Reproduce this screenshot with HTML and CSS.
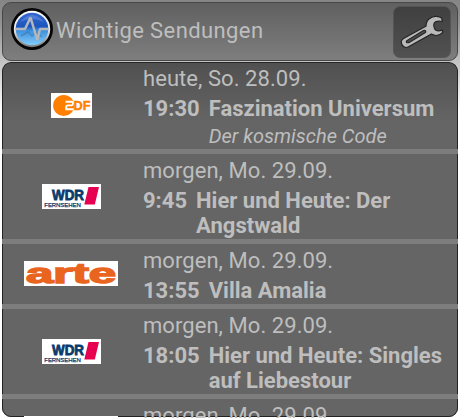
FILE: index.html
```html
<!DOCTYPE html>
<html lang="de">
<head>
<meta charset="utf-8">
<title>Wichtige Sendungen</title>
<link rel="stylesheet" href="styles.css">
</head>
<body>
<svg class="defs" aria-hidden="true">
  <defs>
    <symbol id="zdf" viewBox="0 0 41 25">
      <rect width="41" height="25" fill="#fff"/>
      <circle cx="12.7" cy="12.5" r="10.6" fill="#ff8000"/>
      <path d="M14.5 8.8H20.5Q22 8.8 22 10.5T20.5 12.4H17Q15.2 12.4 15.2 14.2V16.2H22.5" fill="none" stroke="#fff" stroke-width="1.9"/>
      <text x="22.5" y="16.8" font-size="12.5" textLength="17" lengthAdjust="spacingAndGlyphs" class="logo-text zdf-text">DF</text>
    </symbol>
    <symbol id="wdr" viewBox="0 0 59 25">
      <rect width="59" height="25" fill="#fff"/>
      <text x="10" y="16.2" font-size="13.8" textLength="32" lengthAdjust="spacingAndGlyphs" class="logo-text wdr-text">WDR</text>
      <text x="2.3" y="23" font-size="6" textLength="36.5" class="wdr-sub">FERNSEHEN</text>
      <path d="M46.5 3H57L52.8 20.5H42.3Z" fill="#e6004f"/>
    </symbol>
    <symbol id="arte" viewBox="0 0 94 25">
      <rect width="94" height="25" fill="#fff"/>
      <text x="2" y="22" font-size="27" textLength="90" lengthAdjust="spacingAndGlyphs" class="logo-text arte-text">arte</text>
    </symbol>
    <linearGradient id="blue" x1="0" y1="0" x2="0" y2="1">
      <stop offset="0" stop-color="#3467d0"/>
      <stop offset=".42" stop-color="#1c56bd"/>
      <stop offset=".55" stop-color="#3f90dc"/>
      <stop offset="1" stop-color="#82ccfa"/>
    </linearGradient>
    <linearGradient id="rim" x1="0" y1="0" x2="0" y2="1">
      <stop offset="0" stop-color="#fff"/>
      <stop offset=".55" stop-color="#e4e4e4"/>
      <stop offset="1" stop-color="#777"/>
    </linearGradient>
  </defs>
</svg>

<header class="bar">
  <svg class="app-icon" viewBox="0 0 42 42">
    <circle cx="21" cy="21" r="21" fill="#050505"/>
    <circle cx="21" cy="21" r="18.2" fill="url(#rim)"/>
    <circle cx="21" cy="21" r="16.3" fill="url(#blue)"/>
    <path d="M9 14Q21 0 33 14Q21 8 9 14Z" fill="#7195df" opacity=".5"/>
    <path d="M10 28l7-4 4 4 4-4 6 5" fill="none" stroke="#3678b6" stroke-width="1.5" opacity=".6"/>
    <path d="M4.5 21H14L19.5 9.5L26.3 32L29 21H37.5" fill="none" stroke="#b3b7bc" stroke-width="2.5" stroke-linejoin="bevel"/>
  </svg>
  <h1 class="title">Wichtige Sendungen</h1>
  <button class="settings" aria-label="Einstellungen">
    <svg class="wrench" viewBox="0 0 58 52">
      <path d="M48.7 17.9C45 15.3 39.5 16 36 19C33.7 21 33 23.5 33 26.2L10.5 38.5C7.5 40.2 8 43.4 9.4 45.4C11 47.6 13.2 48 15.5 46.8L38.5 34C42.5 36.4 47 35.2 49.7 32.3L49.4 30.2C46 31.2 42.5 30.8 41.5 28.5C40.4 26 40.6 23 43 21.6C45 20.8 47.3 21.3 49.3 21.3Z" transform="translate(0 -6)" fill="#bababa" stroke="#252525" stroke-width="1.2"/>
      <path d="M14.2 34.4L30.5 24.6C32.2 23.6 33.8 25.4 32 26.8L16.2 36.4C13.5 37.5 12.5 35.6 14.2 34.4Z" fill="#505050" stroke="#252525" stroke-width="1.2"/>
    </svg>
  </button>
</header>

<main class="list">
  <article class="row first">
    <div class="channel"><svg class="zdf"><use href="#zdf"/></svg></div>
    <div class="info">
      <div class="date">heute, So. 28.09.</div>
      <div class="show"><span class="time">19:30</span><div class="name">Faszination Universum<div class="sub">Der kosmische Code</div></div></div>
    </div>
  </article>
  <article class="row">
    <div class="channel"><svg class="wdr"><use href="#wdr"/></svg></div>
    <div class="info">
      <div class="date">morgen, Mo. 29.09.</div>
      <div class="show"><span class="time">9:45</span><div class="name">Hier und Heute: Der<br>Angstwald</div></div>
    </div>
  </article>
  <article class="row">
    <div class="channel"><svg class="arte"><use href="#arte"/></svg></div>
    <div class="info">
      <div class="date">morgen, Mo. 29.09.</div>
      <div class="show"><span class="time">13:55</span><div class="name">Villa Amalia</div></div>
    </div>
  </article>
  <article class="row">
    <div class="channel"><svg class="wdr"><use href="#wdr"/></svg></div>
    <div class="info">
      <div class="date">morgen, Mo. 29.09.</div>
      <div class="show"><span class="time">18:05</span><div class="name">Hier und Heute: Singles<br>auf Liebestour</div></div>
    </div>
  </article>
  <article class="row last">
    <div class="channel"><svg class="arte"><use href="#arte"/></svg></div>
    <div class="info">
      <div class="date">morgen, Mo. 29.09.</div>
    </div>
  </article>
</main>
</body>
</html>
```
FILE: styles.css
```css
* { box-sizing: border-box; }

body {
  margin: 0;
  width: 460px;
  height: 420px;
  overflow: hidden;
  padding: 2px 2px 0;
  background: linear-gradient(#858585 0, #909090 20px, #c4c4c4 62px, #fff 110px);
  font-family: Roboto, "Liberation Sans", sans-serif;
  font-size: 22px;
  line-height: 25px;
  color: #bebebe;
}

.defs { position: absolute; width: 0; height: 0; }

.bar {
  display: flex;
  height: 59px;
  border: 1px solid #484848;
  border-radius: 9px;
  background: linear-gradient(#606060, #7e7e7e);
  padding: 3px 6px 0 8px;
}

.app-icon { width: 42px; height: 42px; margin-top: 2px; flex: none; }

.title {
  margin: 12px 0 0 3px;
  font-size: 22px;
  font-weight: 400;
  letter-spacing: .4px;
  white-space: nowrap;
}

.settings {
  margin-left: auto;
  width: 58px;
  height: 52px;
  padding: 0;
  border: 1px solid #555;
  border-radius: 7px;
  background: linear-gradient(#404040, #515151);
}

.wrench { display: block; width: 58px; height: 52px; margin: -1px; }

.list {
  height: 356px;
  margin-top: 1px;
  overflow: hidden;
  border-radius: 9px 9px 0 0;
  background: linear-gradient(#505050, #656565 60px, #656565);
  position: relative;
}

.list::before {
  content: "";
  position: absolute;
  inset: 0 0 1px;
  border: 1px solid #242424;
  border-radius: 9px;
  box-shadow: 0 0 0 9px #fff;
}

.row {
  position: relative;
  display: flex;
  align-items: center;
  border-top: 5px solid #7d7d7d;
  padding-bottom: 1px;
}

.first { border-top: 0; padding-bottom: 0; }
.last { height: 65px; align-items: flex-start; }
.last .channel { padding-top: 17px; }

.channel { width: 139px; display: flex; justify-content: center; }
.channel svg { height: 25px; display: block; }
.zdf { width: 41px; }
.wdr { width: 59px; }
.arte { width: 94px; margin-right: 1px; }

.info { padding-top: 4px; margin-left: 2px; white-space: nowrap; }
.date { margin-bottom: 5px; letter-spacing: .06px; }
.show { display: flex; gap: 9px; font-weight: 700; }
.sub { margin-top: 3px; font-size: 20px; font-weight: 400; font-style: italic; }

.logo-text { font-family: "Liberation Sans", sans-serif; font-weight: 700; }
.zdf-text { fill: #ff8000; stroke: #ff8000; stroke-width: .4px; }
.wdr-text { fill: #0a3a6c; stroke: #0a3a6c; stroke-width: .8px; }
.wdr-sub { fill: #0a3a6c; stroke: #0a3a6c; stroke-width: .25px; font-family: "Liberation Sans", sans-serif; }
.arte-text { fill: #e9641f; stroke: #e9641f; stroke-width: 1.4px; }
```
